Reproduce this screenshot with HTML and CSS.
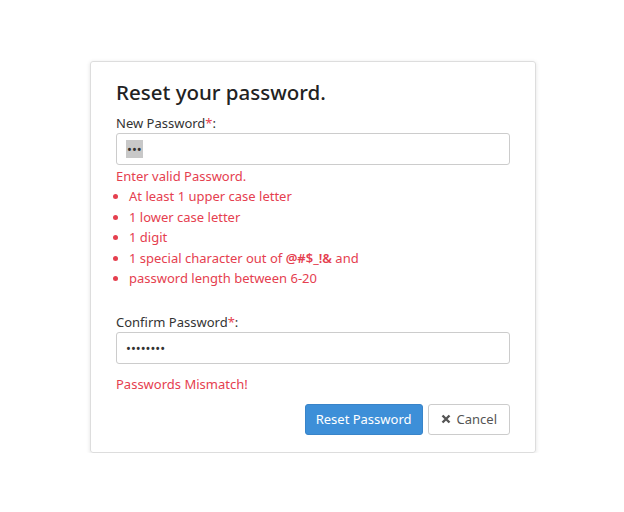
FILE: index.html
```html
<!DOCTYPE html>
<html lang="en">
<head>
    <meta charset="UTF-8">
    <title>Reset Password</title>
    <link rel="stylesheet" href="styles.css">
</head>
<body>

<div class="card">
    <h2 class="title">Reset your password.</h2>

    <label class="label">New Password<span class="req">*</span>:</label>
    <div class="input"><span class="dots selected">&bull;&bull;&bull;</span></div>

    <div class="error">Enter valid Password.</div>
    <ul class="rules">
        <li>At least 1 upper case letter</li>
        <li>1 lower case letter</li>
        <li>1 digit</li>
        <li>1 special character out of <b>@#$_!&amp;</b> and</li>
        <li>password length between 6-20</li>
    </ul>

    <label class="label confirm">Confirm Password<span class="req">*</span>:</label>
    <div class="input"><span class="dots">&bull;&bull;&bull;&bull;&bull;&bull;&bull;&bull;</span></div>

    <div class="error mismatch">Passwords Mismatch!</div>

    <div class="actions">
        <button class="btn btn-primary">Reset Password</button>
        <button class="btn btn-default">
            <svg width="10" height="10" viewBox="0 0 10 10"><path d="M1.5 1.5 8.5 8.5M8.5 1.5 1.5 8.5" stroke="#555" stroke-width="2.4"/></svg>
            Cancel
        </button>
    </div>
</div>

</body>
</html>
```

FILE: styles.css
```css
body {
    margin: 0;
    background: #fff;
    font-family: "Noto Sans", "Open Sans", sans-serif;
    font-size: 13px;
    color: #333;
}
.card {
    width: 394px;
    margin: 61px 0 0 90px;
    padding: 15px 25px 17px 25px;
    border: 1px solid #ddd;
    border-radius: 3px;
    box-shadow: 0 1px 4px rgba(0, 0, 0, 0.12);
}
.title {
    margin: 0 0 6px;
    font-size: 20.5px;
    font-weight: 500;
    line-height: 30px;
    color: #222;
}
.label {
    display: block;
    line-height: 20px;
}
.label.confirm {
    margin-top: 23px;
}
.req {
    color: #e5404f;
}
.input {
    height: 30px;
    border: 1px solid #ccc;
    border-radius: 3px;
    display: flex;
    align-items: center;
    padding: 0 9px;
}
.dots {
    font-size: 13px;
    color: #333;
    line-height: 18px;
}
.dots.selected {
    background: #c8c8c8;
    padding: 0 1px;
}
.error {
    color: #e5404f;
    line-height: 20px;
    margin-top: 1px;
}
.rules {
    margin: 0;
    padding-left: 13px;
    color: #e5404f;
}
.rules li {
    line-height: 20.5px;
}
.rules b {
    font-weight: 600;
}
.error.mismatch {
    margin-top: 10px;
}
.actions {
    display: flex;
    justify-content: flex-end;
    gap: 5px;
    margin-top: 10px;
}
.btn {
    height: 31px;
    border-radius: 3px;
    font-family: inherit;
    font-size: 13px;
    padding: 0 10px;
    cursor: pointer;
}
.btn-primary {
    background: #3d8fd8;
    border: 1px solid #3884c9;
    color: #fff;
}
.btn-default {
    background: #fff;
    border: 1px solid #ccc;
    color: #555;
    display: flex;
    align-items: center;
    gap: 6px;
    padding: 0 12px;
}
```
